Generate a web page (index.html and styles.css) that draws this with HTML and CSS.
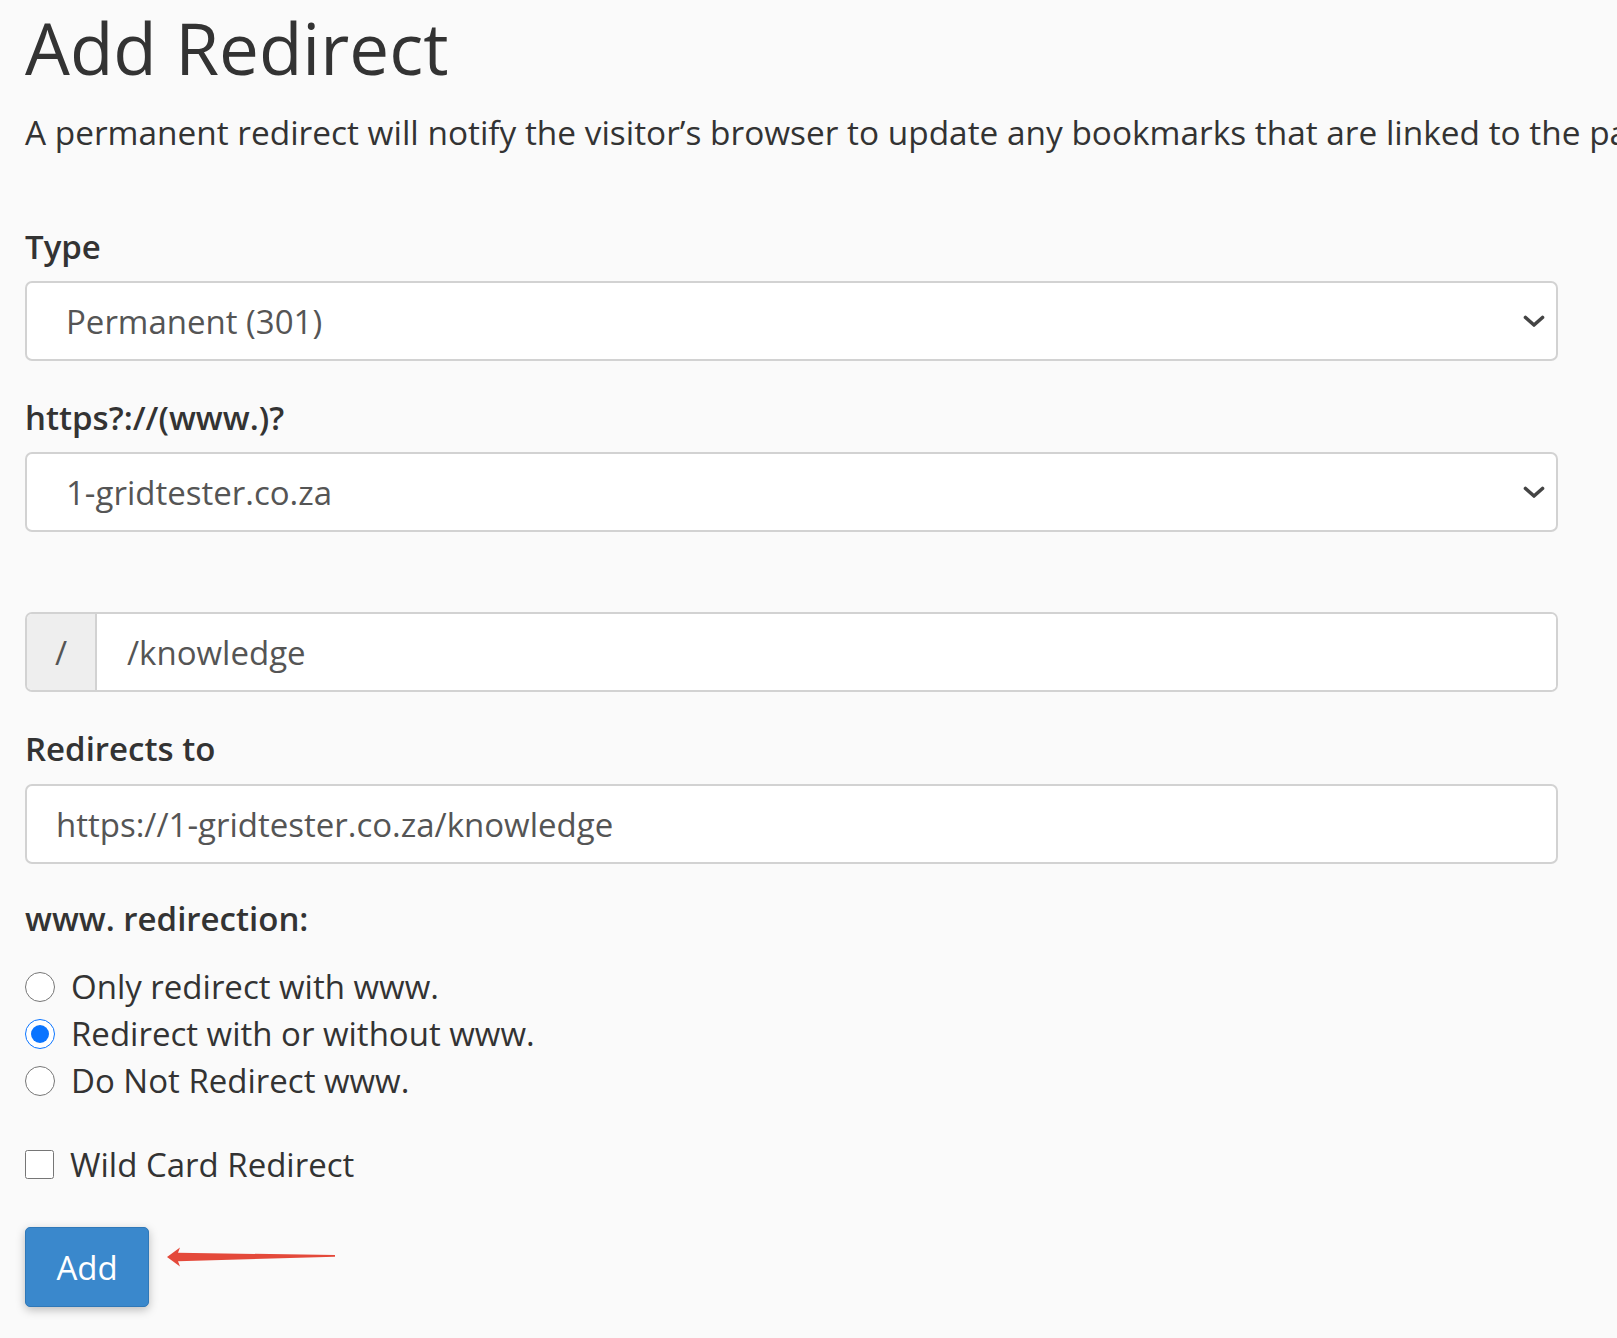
FILE: index.html
```html
<!DOCTYPE html>
<html lang="en">
<head>
<meta charset="utf-8">
<title>Add Redirect</title>
<link rel="stylesheet" href="styles.css">
</head>
<body>
<main class="page">
  <h1 class="title">Add Redirect</h1>
  <p class="intro">A permanent redirect will notify the visitor’s browser to update any bookmarks that are linked to the page that is being redirected.</p>

  <label class="label label-type" for="type">Type</label>
  <div class="select-wrap">
    <select id="type" class="control select">
      <option>Permanent (301)</option>
      <option>Temporary (302)</option>
    </select>
    <svg class="chevron" viewBox="0 0 22 13" width="22" height="13"><path d="M2.5 2.5 L11 10 L19.5 2.5" fill="none" stroke="#444" stroke-width="3.6" stroke-linecap="round" stroke-linejoin="round"/></svg>
  </div>

  <label class="label label-domain" for="domain">https?://(www.)?</label>
  <div class="select-wrap">
    <select id="domain" class="control select">
      <option>1-gridtester.co.za</option>
    </select>
    <svg class="chevron" viewBox="0 0 22 13" width="22" height="13"><path d="M2.5 2.5 L11 10 L19.5 2.5" fill="none" stroke="#444" stroke-width="3.6" stroke-linecap="round" stroke-linejoin="round"/></svg>
  </div>

  <div class="input-group">
    <span class="addon">/</span>
    <input class="group-input" type="text" value="/knowledge">
  </div>

  <label class="label label-target" for="target">Redirects to</label>
  <input id="target" class="control text-input" type="text" value="https://1-gridtester.co.za/knowledge">

  <div class="label label-www">www. redirection:</div>
  <div class="radios">
    <label class="choice"><input type="radio" name="www" class="radio"> <span>Only redirect with www.</span></label>
    <label class="choice"><input type="radio" name="www" class="radio" checked> <span>Redirect with or without www.</span></label>
    <label class="choice"><input type="radio" name="www" class="radio"> <span>Do Not Redirect www.</span></label>
  </div>

  <label class="choice wildcard"><input type="checkbox" class="check"> <span>Wild Card Redirect</span></label>

  <div class="actions">
    <button class="btn" type="button">Add</button>
    <svg class="arrow" viewBox="0 0 168 22" width="168" height="22"><path d="M0 11 L13 1.5 L11 6.8 L168 9 L168 10.8 L11 15.2 L13 20.5 Z" fill="#e4493a"/></svg>
  </div>
</main>
</body>
</html>
```

FILE: styles.css
```css
* { box-sizing: border-box; }
html, body {
  margin: 0;
  padding: 0;
  background: #fafafa;
}
body {
  font-family: "Open Sans", "Liberation Sans", sans-serif;
  color: #333;
  overflow: hidden;
}
.page {
  width: 1617px;
  height: 1338px;
  padding: 0 0 0 25px;
  display: flex;
  flex-direction: column;
  align-items: flex-start;
  overflow: hidden;
}
.title {
  margin: 8px 0 0;
  font-size: 71px;
  font-weight: 400;
  line-height: 79px;
  white-space: nowrap;
}
.intro {
  margin: 25px 0 0;
  font-size: 33.4px;
  line-height: 40px;
  white-space: nowrap;
}
.label {
  display: block;
  font-size: 33px;
  font-weight: 600;
  line-height: 40px;
}
.label-type { margin-top: 75px; }
.label-domain { margin-top: 37px; }
.label-target { margin-top: 37px; }
.label-www { margin-top: 35px; }

.select-wrap {
  position: relative;
  width: 1533px;
  margin-top: 14px;
}
.control {
  display: block;
  width: 1533px;
  height: 80px;
  border: 2px solid #d2d2d2;
  border-radius: 7px;
  background: #fff;
  font-family: "Open Sans", "Liberation Sans", sans-serif;
  font-size: 33px;
  color: #555;
  outline: none;
}
.select {
  appearance: none;
  -webkit-appearance: none;
  padding: 0 60px 0 39px;
}
.chevron {
  position: absolute;
  right: 13px;
  top: 34px;
  pointer-events: none;
}
.input-group {
  display: flex;
  width: 1533px;
  height: 80px;
  margin-top: 80px;
  border: 2px solid #d2d2d2;
  border-radius: 7px;
  background: #fff;
  overflow: hidden;
}
.addon {
  width: 70px;
  flex: none;
  display: flex;
  align-items: center;
  justify-content: center;
  background: #eee;
  border-right: 2px solid #d2d2d2;
  font-size: 33px;
  color: #555;
}
.group-input {
  flex: 1;
  border: 0;
  padding: 0 0 0 30px;
  font-family: "Open Sans", "Liberation Sans", sans-serif;
  font-size: 33px;
  color: #555;
  background: #fff;
  outline: none;
}
.text-input {
  margin-top: 15px;
  padding: 0 0 0 29px;
}
.radios {
  display: flex;
  flex-direction: column;
  margin-top: 24px;
}
.choice {
  display: flex;
  align-items: center;
  height: 47px;
  font-size: 33px;
  color: #333;
}
.choice span { margin-left: 16px; }
.radio {
  width: 30px;
  height: 30px;
  margin: 0;
  accent-color: #0a74ff;
}
.wildcard {
  margin-top: 37px;
}
.check {
  width: 29px;
  height: 29px;
  margin: 0;
}
.actions {
  display: flex;
  align-items: flex-start;
  margin-top: 39px;
}
.btn {
  width: 124px;
  height: 80px;
  border: 1px solid #2f78b8;
  border-radius: 5px;
  background: #3a88cc;
  color: #fff;
  font-family: "Open Sans", "Liberation Sans", sans-serif;
  font-size: 33px;
  box-shadow: 0 3px 10px rgba(0,0,0,0.25);
  padding: 0;
}
.arrow {
  margin-left: 18px;
  margin-top: 19px;
}
```
